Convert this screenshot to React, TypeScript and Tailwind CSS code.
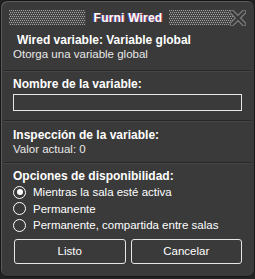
import { useState } from 'react';

const options = [
  'Mientras la sala esté activa',
  'Permanente',
  'Permanente, compartida entre salas',
];

function Dots({ width }: { width: number }) {
  const cols = Math.floor(width / 2);
  const rows = 8;
  const cells = [];
  for (let r = 0; r < rows; r++) {
    for (let c = 0; c < cols; c++) {
      cells.push(<rect key={`${r}-${c}`} x={c * 2 + (r % 2)} y={r * 2} width="1" height="1" fill="#a0a0a0" />);
    }
  }
  return (
    <div className="h-[15px] shrink-0 bg-[#454545]" style={{ width }}>
      <svg width={width} height="15" viewBox={`0 0 ${width} 15`} className="block" shapeRendering="crispEdges">
        {cells}
      </svg>
    </div>
  );
}

function Separator() {
  return <div className="mx-[3px] h-px bg-[#262626] shadow-[0_1px_0_#474747]" />;
}

export default function App() {
  const [selected, setSelected] = useState(0);

  return (
    <div className="w-[255px] h-[279px] bg-[#222] font-['Liberation_Sans',Arial,sans-serif] text-[11.5px] leading-[14px] text-white">
      <div className="flex h-[277px] flex-col rounded-[7px] border border-[#161616] bg-[#3a3a3a] shadow-[inset_1px_1px_0_#5a5a5a]">
        <div className="flex h-[32px] shrink-0 items-center pl-[8px] pt-px">
          <Dots width={77} />
          <span className="ml-[7px] w-[70px] text-center text-[12px] font-bold tracking-[0.2px] [text-shadow:1px_0_#a0404e,-1px_0_#3f50b0]">
            Furni Wired
          </span>
          <div className="ml-[6px] flex items-center">
            <Dots width={64} />
            <svg width="16" height="16" viewBox="0 0 16 16" className="-ml-[3px] shrink-0">
              <path d="M2 2 L14 14 M14 2 L2 14" stroke="#7b7b7b" strokeWidth="5" strokeLinecap="square" />
              <path d="M2 2 L14 14 M14 2 L2 14" stroke="#3a3a3a" strokeWidth="2.4" strokeLinecap="square" />
            </svg>
          </div>
        </div>

        <div className="flex flex-col px-3 pb-[9px]">
          <div className="pl-1 text-[12px] font-bold">Wired variable: Variable global</div>
          <div className="text-[#e8e8e8]">Otorga una variable global</div>
        </div>

        <Separator />

        <div className="flex flex-col gap-[3px] px-3 pt-[6px] pb-[9px]">
          <div className="text-[12px] font-bold">Nombre de la variable:</div>
          <input className="h-[17px] w-full border border-[#e6e6e6] bg-[#3a3a3a] px-1 text-white outline-none" />
        </div>

        <Separator />

        <div className="flex flex-col px-3 pt-[7px] pb-[6px]">
          <div className="text-[12px] font-bold">Inspección de la variable:</div>
          <div className="text-[#e8e8e8]">Valor actual: 0</div>
        </div>

        <Separator />

        <div className="flex flex-col px-3 pt-[6px]">
          <div className="mb-px text-[12px] font-bold">Opciones de disponibilidad:</div>
          {options.map((label, i) => (
            <button
              key={label}
              onClick={() => setSelected(i)}
              className="flex h-[16.5px] items-center gap-[7px] text-left"
            >
              <span className="flex h-[13px] w-[13px] items-center justify-center rounded-full border border-white">
                {selected === i && <span className="h-[6px] w-[6px] rounded-full bg-white" />}
              </span>
              <span>{label}</span>
            </button>
          ))}
          <div className="mt-[5px] flex gap-[5px] pl-px">
            <button className="h-[25px] flex-1 rounded-[3px] border border-[#e6e6e6]">Listo</button>
            <button className="h-[25px] flex-1 rounded-[3px] border border-[#e6e6e6]">Cancelar</button>
          </div>
        </div>
      </div>
    </div>
  );
}
